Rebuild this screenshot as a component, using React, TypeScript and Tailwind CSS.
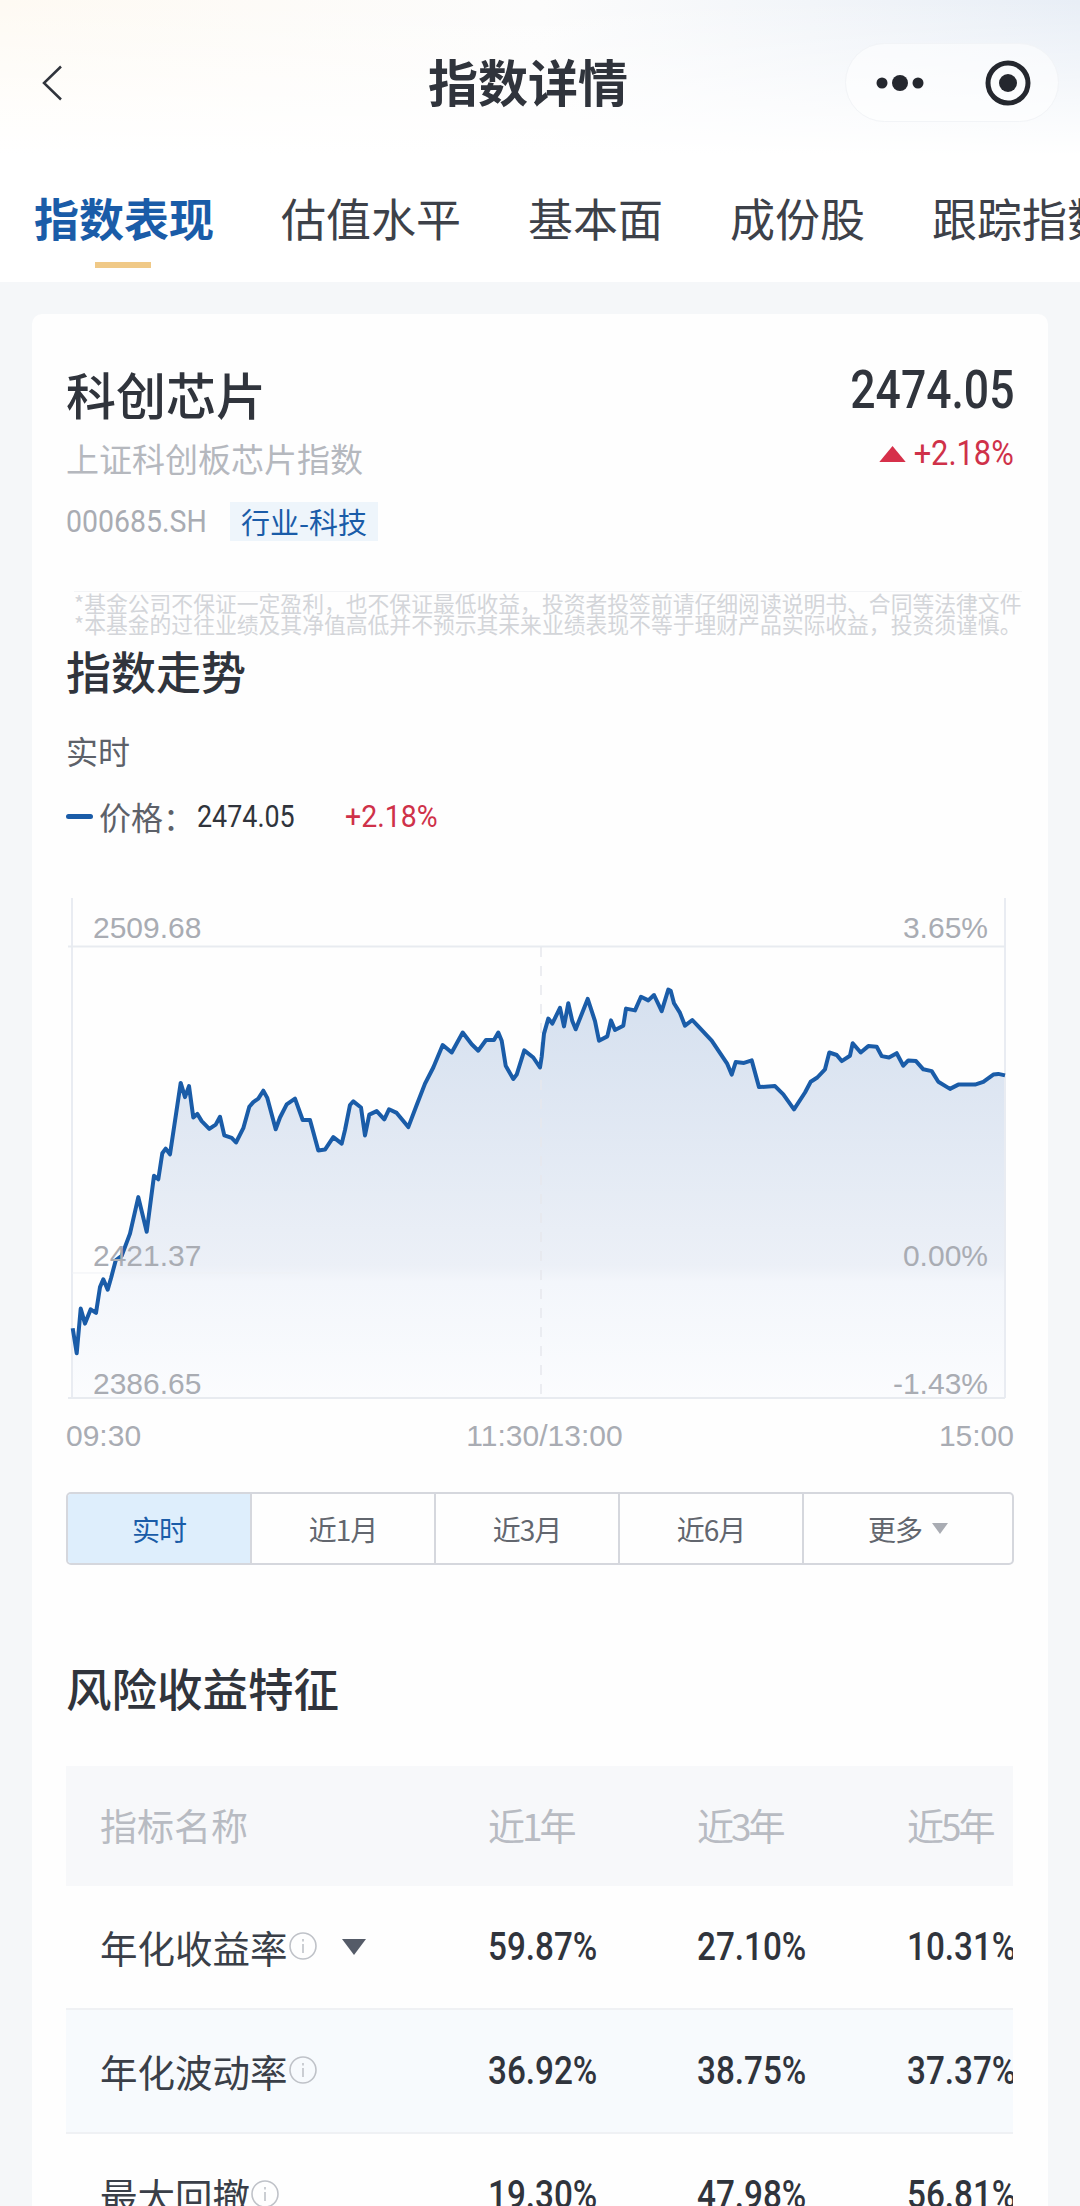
// points read off the reference chart: left half and right half
const leftPts = [[68,1255],[80,1325],[92,1200],[105,1242],[122,1202],[138,1212],[150,1140],[160,1118],[173,1147],[183,1115],[197,1065],[215,1052],[240,990],[265,888],[290,985],[312,828],[325,838],[337,765],[347,752],[360,768],[392,568],[405,608],[417,577],[430,665],[442,655],[455,675],[478,697],[497,685],[510,663],[523,715],[545,722],[558,735],[580,695],[598,635],[610,622],[625,612],[640,590],[652,610],[677,698],[690,665],[710,628],[735,612],[758,672],[780,672],[805,757],[825,755],[850,720],[875,738],[885,700],[900,630],[910,620],[933,637],[945,715],[958,657],[980,647],[1003,670],[1017,642],[1040,652],[1075,692],[1100,630],[1125,570],[1150,525],[1178,462],[1205,483],[1238,427],[1265,460],[1285,478],[1308,448],[1332,448],[1345,427],[1355,450],[1367,520],[1390,557],[1400,545],[1423,477],[1450,497],[1470,525]]
const rightPts = [[65,495],[72,430],[85,388],[97,402],[120,358],[132,410],[145,345],[157,395],[167,418],[203,333],[225,395],[237,450],[262,438],[273,393],[285,420],[310,408],[318,360],[345,365],[363,327],[385,337],[402,322],[425,367],[445,307],[452,310],[462,345],[480,372],[495,408],[517,392],[535,410],[575,450],[622,515],[635,545],[647,510],[672,512],[695,505],[717,580],[765,577],[790,600],[822,642],[855,595],[872,565],[892,553],[915,530],[928,483],[950,490],[965,507],[990,492],[998,457],[1022,483],[1045,465],[1070,467],[1085,493],[1107,497],[1130,485],[1150,520],[1165,505],[1188,507],[1210,530],[1235,535],[1255,565],[1290,585],[1315,573],[1365,573],[1390,565],[1420,545],[1435,543],[1455,547]]

const line = [
  ...leftPts.map(([x, y]) => [50 + x / 3, 880 + y / 2.8]),
  ...rightPts.map(([x, y]) => [520 + x / 3, 880 + y / 2.8]),
]
const linePath = line.map(([x, y]) => `${x.toFixed(1)},${y.toFixed(1)}`).join(' ')
const areaPath = `${linePath} 1005,1398 73,1398`

const tabs = ['估值水平', '基本面', '成份股', '跟踪指数']
const ranges = ['近1月', '近3月', '近6月']
const rows = [
  { name: '年化收益率', caret: true, vals: ['59.87%', '27.10%', '10.31%'] },
  { name: '年化波动率', alt: true, vals: ['36.92%', '38.75%', '37.37%'] },
  { name: '最大回撤', vals: ['19.30%', '47.98%', '56.81%'] },
]

function InfoIcon() {
  return (
    <svg width="30" height="30" viewBox="0 0 30 30" fill="none" className="shrink-0 -mt-[2px]">
      <circle cx="15" cy="15" r="13" stroke="#bfc2c8" strokeWidth="1.6" />
      <path d="M15 13v9M15 8v2.5" stroke="#bfc2c8" strokeWidth="1.6" />
    </svg>
  )
}

function Chart() {
  return (
    <svg width="948" height="510" viewBox="66 895 948 510" className="block font-['Liberation_Sans',sans-serif]">
      <defs>
        <linearGradient id="area" gradientUnits="userSpaceOnUse" x1="0" y1="985" x2="0" y2="1398">
          <stop offset="0" stopColor="#d5e0ef" />
          <stop offset="0.68" stopColor="#ecf0f7" />
          <stop offset="0.72" stopColor="#f3f6fb" />
          <stop offset="1" stopColor="#fbfcfe" />
        </linearGradient>
      </defs>
      <polygon points={areaPath} fill="url(#area)" />
      <path d="M72 898V1398M1005 898V1398" stroke="#e9ecf2" strokeWidth="2" />
      <path d="M68 946.5H1005M68 1398H1005" stroke="#e8ebf0" strokeWidth="2" />
      <path d="M72 1273H300" stroke="#eff1f5" strokeWidth="1" />
      <path d="M541 947V1398" stroke="#e6e8ed" strokeWidth="1.5" strokeDasharray="10 9" />
      <polyline points={linePath} fill="none" stroke="#1a5ca8" strokeWidth="4" strokeLinejoin="round" />
      <g fontSize="30" fill="#a9acb3">
        <text x="93" y="938">2509.68</text>
        <text x="93" y="1266">2421.37</text>
        <text x="93" y="1394">2386.65</text>
        <text x="988" y="938" textAnchor="end">3.65%</text>
        <text x="988" y="1266" textAnchor="end">0.00%</text>
        <text x="988" y="1394" textAnchor="end">-1.43%</text>
      </g>
    </svg>
  )
}

export default function App() {
  return (
    <div className="w-[1080px] h-[2206px] overflow-hidden bg-[#f5f7f9] font-['Noto_Sans_CJK_SC',sans-serif] text-[#30343c]">
      {/* top bar + tabs */}
      <div className="h-[282px] overflow-hidden bg-[linear-gradient(180deg,rgba(255,255,255,0)_0%,#ffffff_55%),linear-gradient(90deg,#fefaf3_0%,#fcfcfc_50%,#e8eef6_100%)]">
        <div className="flex items-center h-[79px] mt-[43px] pl-[42px]">
          <svg width="20" height="36" viewBox="0 0 20 36" fill="none" className="shrink-0">
            <path d="M19 1.5L2 18l17 16.5" stroke="#30343c" strokeWidth="2.5" />
          </svg>
          <h1 className="ml-[366px] -mt-[6px] w-[200px] shrink-0 text-[50px] leading-[60px] font-bold whitespace-nowrap">指数详情</h1>
          <div className="ml-[217px] shrink-0 flex items-center w-[214px] h-[79px] rounded-full bg-white/50 border border-[#f2f4f7]">
            <svg width="108" height="40" viewBox="0 0 108 40" className="shrink-0">
              <circle cx="36" cy="20" r="5.5" fill="#24272e" />
              <circle cx="54" cy="20" r="8" fill="#24272e" />
              <circle cx="72" cy="20" r="5.5" fill="#24272e" />
            </svg>
            <div className="w-px h-[62px] bg-[#eceef2]" />
            <svg width="104" height="46" viewBox="0 0 104 46" className="shrink-0">
              <circle cx="54" cy="23" r="20" fill="none" stroke="#24272e" strokeWidth="5" />
              <circle cx="54" cy="23" r="9" fill="#24272e" />
            </svg>
          </div>
        </div>
        <div className="flex items-center gap-[67px] mt-[66px] pl-[34px] whitespace-nowrap text-[45px] leading-[60px] text-[#3d4149]">
          <div className="relative font-bold text-[#1a5ca8] shrink-0">
            指数表现
            <span className="absolute left-[61px] top-[74px] w-[56px] h-[6px] bg-[#f0c987]" />
          </div>
          {tabs.map(t => (
            <div key={t} className="shrink-0">{t}</div>
          ))}
        </div>
      </div>

      {/* card */}
      <div className="mx-[32px] mt-[32px] h-[1900px] rounded-t-[10px] bg-[#fefefe] overflow-hidden">
        <div className="px-[34px]">
          {/* index head */}
          <div className="flex justify-between pt-[49px]">
            <div>
              <h2 className="text-[50px] leading-[60px] font-medium">科创芯片</h2>
              <div className="mt-[13px] text-[33px] leading-[44px] text-[#b5b8be]">上证科创板芯片指数</div>
              <div className="flex items-center mt-[21px]">
                <span className="w-[164px] font-['Roboto',sans-serif] text-[32px] leading-[40px] text-[#a9acb3]">
                  <span className="inline-block origin-left scale-x-[0.89]">000685.SH</span>
                </span>
                <span className="px-[11px] h-[39px] flex items-center bg-[#eef5fb] text-[#1a5ca8] text-[29px] leading-[39px]">行业-科技</span>
              </div>
            </div>
            <div className="flex flex-col items-end font-['Roboto',sans-serif] -mt-[3px]">
              <div className="font-medium text-[53px] leading-[60px] origin-right scale-x-[0.84]">2474.05</div>
              <div className="flex items-center mt-[14px] origin-right scale-x-[0.88] text-[#cf3149] text-[35px] leading-[40px]">
                <span className="w-0 h-0 mr-[9px] border-x-[15px] border-x-transparent border-b-[16px] border-b-[#d6304a]" />
                +2.18%
              </div>
            </div>
          </div>

          {/* disclaimer */}
          <div className="mt-[50px] ml-[8px] -mr-[8px] whitespace-nowrap text-[21.8px] leading-[21px] text-[#d3d5d9] border-t border-[#f3f4f6]">
            <div>*基金公司不保证一定盈利，也不保证最低收益，投资者投签前请仔细阅读说明书、合同等法律文件</div>
            <div>*本基金的过往业绩及其净值高低并不预示其未来业绩表现不等于理财产品实际收益，投资须谨慎。</div>
          </div>

          {/* trend */}
          <h2 className="mt-[7px] text-[45px] leading-[60px] font-medium">指数走势</h2>
          <div className="mt-[27px] text-[32px] leading-[44px] text-[#5d6169]">实时</div>
          <div className="flex items-center mt-[22px] h-[44px]">
            <span className="w-[27px] h-[5px] bg-[#1a5ca8] rounded-full" />
            <span className="ml-[6px] w-[98px] text-[32px] text-[#5d6169]">价格：</span>
            <span className="w-[148px] font-['Roboto',sans-serif] text-[32px] text-[#30343c]">
              <span className="inline-block origin-left scale-x-[0.84]">2474.05</span>
            </span>
            <span className="font-['Roboto',sans-serif] text-[32px] text-[#cf3149]">
              <span className="inline-block origin-left scale-x-[0.89]">+2.18%</span>
            </span>
          </div>

          <div className="mt-[57px]">
            <Chart />
          </div>
          <div className="flex justify-between mt-[13px] font-['Liberation_Sans',sans-serif] text-[30px] leading-[36px] text-[#a9acb3]">
            <span>09:30</span>
            <span className="ml-[9px]">11:30/13:00</span>
            <span>15:00</span>
          </div>

          {/* range buttons */}
          <div className="flex mt-[38px] w-[948px] h-[73px] border-2 border-[#d5d7dd] rounded-[5px] text-[28px] tracking-[-1px] text-[#62666e] overflow-hidden">
            <div className="w-[184px] flex items-center justify-center bg-[#deeefc] text-[#1a5ca8] border-r-2 border-[#d5d7dd]">实时</div>
            {ranges.map(r => (
              <div key={r} className="w-[184px] flex items-center justify-center border-r-2 border-[#d5d7dd]">{r}</div>
            ))}
            <div className="flex-1 flex items-center justify-center gap-[10px]">
              更多
              <span className="w-0 h-0 border-x-[8px] border-x-transparent border-t-[11px] border-t-[#a9acb3]" />
            </div>
          </div>

          <h2 className="mt-[92px] text-[45.5px] leading-[60px] font-medium">风险收益特征</h2>

          {/* risk table */}
          <div className="mt-[49px] w-[947px] overflow-hidden">
            <div className="grid grid-cols-[422px_209px_210px_106px] items-center h-[120px] bg-[#f7f8fa] text-[37px] text-[#b8bbc2] whitespace-nowrap">
              <div className="pl-[34px]">指标名称</div>
              <div className="tracking-[-3px]">近1年</div>
              <div className="tracking-[-3px]">近3年</div>
              <div className="tracking-[-3px]">近5年</div>
            </div>
            {rows.map(row => (
              <div
                key={row.name}
                className={`grid grid-cols-[422px_209px_210px_106px] items-center h-[124px] border-b-2 border-[#eff1f4] whitespace-nowrap ${row.alt ? 'bg-[#f7fafd]' : ''}`}
              >
                <div className="flex items-center pl-[34px] text-[37.5px] text-[#3a3f48]">
                  {row.name}
                  <InfoIcon />
                  {row.caret && (
                    <span className="ml-[24px] w-0 h-0 border-x-[12px] border-x-transparent border-t-[16px] border-t-[#555b68]" />
                  )}
                </div>
                {row.vals.map(v => (
                  <div key={v} className="font-['Roboto',sans-serif] font-medium text-[38px] text-[#30343c]">
                    <span className="inline-block origin-left scale-x-[0.875]">{v}</span>
                  </div>
                ))}
              </div>
            ))}
          </div>
        </div>
      </div>
    </div>
  )
}
